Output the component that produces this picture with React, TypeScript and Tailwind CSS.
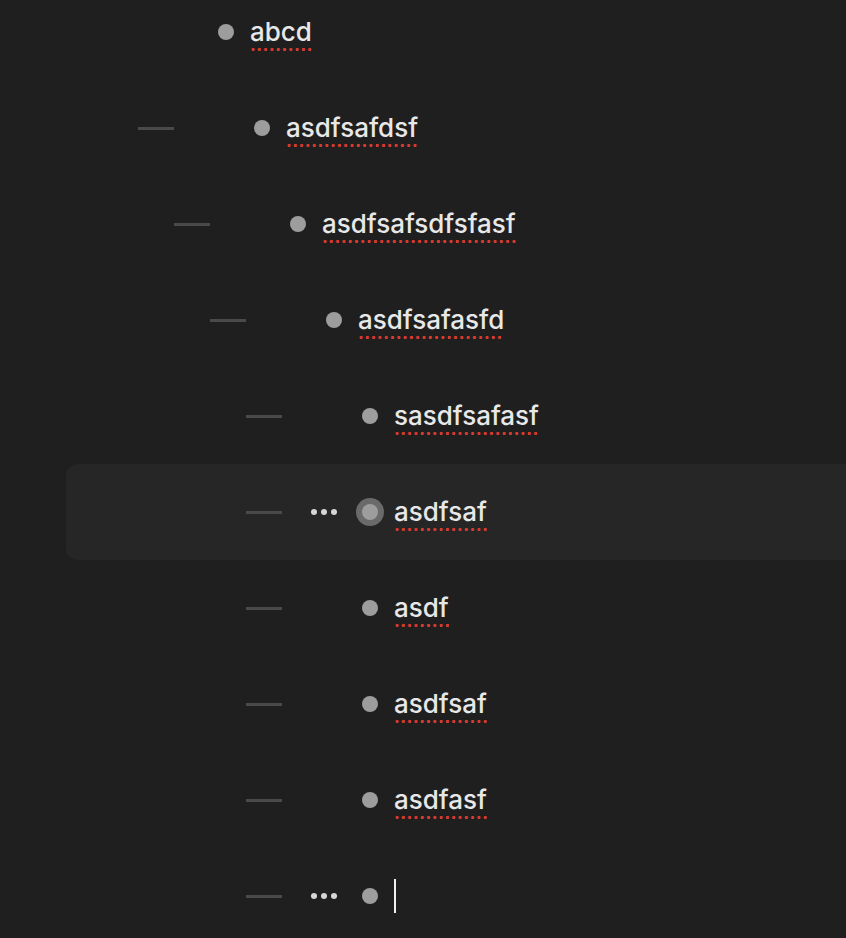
const rows = [
  { text: 'abcd', pad: 'pl-[102px]', dash: false },
  { text: 'asdfsafdsf', pad: 'pl-[138px]', dash: true },
  { text: 'asdfsafsdfsfasf', pad: 'pl-[174px]', dash: true },
  { text: 'asdfsafasfd', pad: 'pl-[210px]', dash: true },
  { text: 'sasdfsafasf', pad: 'pl-[246px]', dash: true },
  { text: 'asdfsaf', pad: 'pl-[246px]', dash: true, more: true, selected: true },
  { text: 'asdf', pad: 'pl-[246px]', dash: true },
  { text: 'asdfsaf', pad: 'pl-[246px]', dash: true },
  { text: 'asdfasf', pad: 'pl-[246px]', dash: true },
  { text: '', pad: 'pl-[246px]', dash: true, more: true, cursor: true },
]

function Bullet({ selected }: { selected?: boolean }) {
  return (
    <div className="ml-[19px] flex h-7 w-7 items-center justify-center">
      {selected ? (
        <div className="flex h-7 w-7 items-center justify-center rounded-full bg-[#6a6a6a]">
          <div className="h-4 w-4 rounded-full bg-[#9d9d9d]" />
        </div>
      ) : (
        <div className="h-4 w-4 rounded-full bg-[#9d9d9d]" />
      )}
    </div>
  )
}

function Row({ row }: { row: (typeof rows)[number] }) {
  const outer = row.selected
    ? 'ml-[66px] -mr-6 rounded-xl bg-[#262626] pl-[180px]'
    : row.pad
  return (
    <div className={`flex h-24 items-center ${outer}`}>
      <div className={`h-[3px] w-9 ${row.dash ? 'bg-[#4a4a4a]' : ''}`} />
      <div className="ml-[29px] flex w-[26px] justify-between">
        {row.more &&
          [0, 1, 2].map((i) => <span key={i} className="h-[6px] w-[6px] rounded-full bg-[#d6d6d6]" />)}
      </div>
      <Bullet selected={row.selected} />
      <div className="ml-[10px] flex items-center">
        {row.text && (
          <span className="relative top-[2px] bg-[radial-gradient(circle,#d8392f_1.5px,transparent_1.9px)] bg-[length:6.3px_5px] bg-[position:0_100%] bg-repeat-x pb-[4px] text-[26px] font-medium leading-8 text-[#e8e8e8]">
            {row.text}
          </span>
        )}
        {row.cursor && <span className="h-[34px] w-[2px] bg-[#f0f0f0]" />}
      </div>
    </div>
  )
}

export default function App() {
  return (
    <div className="h-[938px] overflow-hidden bg-[#1f1f1f] font-['Inter','Noto_Sans',sans-serif]">
      <div className="-mt-4">
        {rows.map((row, i) => (
          <Row key={i} row={row} />
        ))}
      </div>
    </div>
  )
}
